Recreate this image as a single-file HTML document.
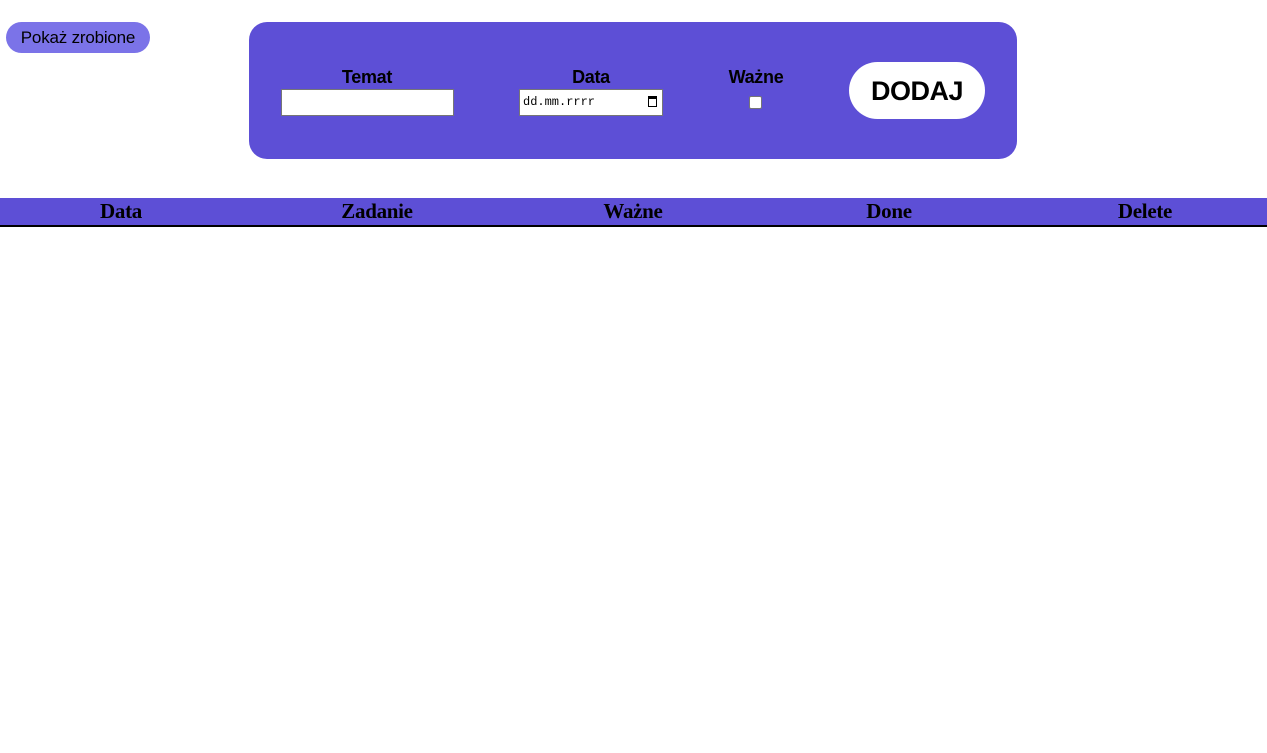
<!DOCTYPE html>
<html><head><style>
body{margin:0;background:#fff;font-family:"Liberation Sans",sans-serif;width:1267px;height:753px;position:relative;overflow:hidden}
.btn{position:absolute;left:6px;top:22px;width:144px;height:31px;border-radius:16px;background:#7b73e8;font-size:17px;line-height:31px;text-align:center;color:#000;letter-spacing:-0.2px}
.panel{position:absolute;left:249px;top:22px;width:768px;height:137px;border-radius:18px;background:#5d4fd6}
.lbl{position:absolute;font-size:18px;font-weight:bold;text-align:center;color:#000;letter-spacing:-0.3px}
.inp{position:absolute;background:#fff;border:1px solid #767676;box-sizing:border-box}
.add{position:absolute;left:600px;top:40px;width:136px;height:57px;border-radius:29px;background:#fff;font-size:27px;font-weight:bold;line-height:59px;text-align:center;letter-spacing:-0.5px}
.th{position:absolute;top:198px;left:0;width:1267px;height:27px;background:#5d4fd6;border-bottom:2px solid #000}
.th div{position:absolute;width:200px;margin-left:-100px;text-align:center;font-family:"Liberation Serif",serif;font-weight:bold;font-size:21px;line-height:27px;letter-spacing:-0.3px}
</style></head><body>
<div class="btn">Pokaż zrobione</div>
<div class="panel">
<div class="lbl" style="left:32px;top:45px;width:172px">Temat</div>
<div class="inp" style="left:32px;top:67px;width:173px;height:27px"></div>
<div class="lbl" style="left:270px;top:45px;width:144px">Data</div>
<div class="inp" style="left:270px;top:67px;width:144px;height:27px;font-family:'Liberation Mono',monospace;font-size:12px;line-height:25px;padding-left:3px">dd.mm.rrrr<span style="position:absolute;right:5px;top:6px;width:9px;height:11px;border:1.5px solid #000;border-top-width:3px;box-sizing:border-box"></span></div>
<div class="lbl" style="left:472px;top:45px;width:70px">Ważne</div>
<div class="inp" style="left:500px;top:74px;width:13px;height:13px;border-radius:2px"></div>
<div class="add">DODAJ</div>
</div>
<div class="th"><div style="left:121px">Data</div><div style="left:377px">Zadanie</div><div style="left:633px">Ważne</div><div style="left:889px">Done</div><div style="left:1145px">Delete</div></div>
</body></html>
